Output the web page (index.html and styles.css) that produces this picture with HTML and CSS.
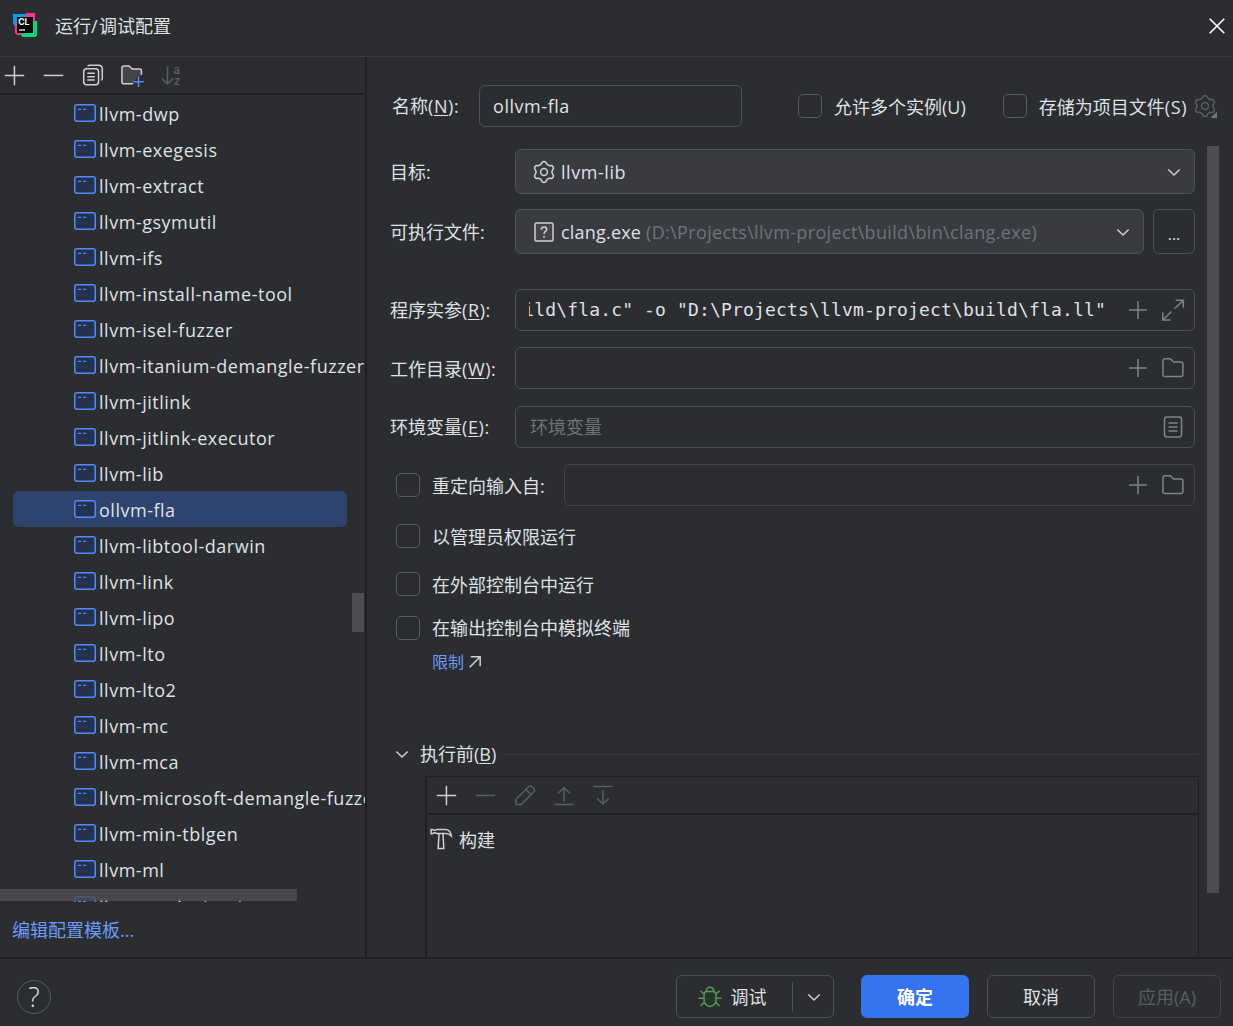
FILE: index.html
```html
<!DOCTYPE html>
<html lang="zh-CN">
<head>
<meta charset="utf-8">
<title>运行/调试配置</title>
<link rel="stylesheet" href="styles.css">
</head>
<body>
<svg class="defs" aria-hidden="true">
  <symbol id="add" viewBox="0 0 16 16"><path d="M8.300 1.800v13M1.800 8.300h13"/></symbol>
  <symbol id="remove" viewBox="0 0 16 16"><path d="M1.800 8.300h13"/></symbol>
  <symbol id="plus" viewBox="0 0 16 16"><path d="M8 2v12M2 8h12"/></symbol>
  <symbol id="chevron" viewBox="0 0 16 16"><path d="M4.200 6.300 8 10l3.800-3.700"/></symbol>
  <symbol id="folder" viewBox="0 0 16 16"><path d="M1.300 3.200a1.300 1.300 0 0 1 1.300-1.300h3.100c.4 0 .8.200 1.100.5l1.500 1.600h5c.7 0 1.300.6 1.300 1.300v7.100c0 .7-.6 1.300-1.300 1.300H2.600c-.7 0-1.300-.6-1.300-1.300z"/></symbol>
  <symbol id="gear" viewBox="-8 -8 16 16"><path d="M-1.200-6.600Q0-7.300 1.200-6.600Q2.150-3.720 5.120-4.340Q6.320-3.650 6.320-2.260Q4.300 0 6.320 2.260Q6.320 3.650 5.120 4.340Q2.150 3.720 1.200 6.600Q0 7.300-1.200 6.600Q-2.150 3.720-5.120 4.340Q-6.320 3.650-6.320 2.260Q-4.300 0-6.320-2.260Q-6.320-3.650-5.120-4.340Q-2.150-3.720-1.200-6.600z"/><circle r="2.300"/></symbol>
  <symbol id="app" viewBox="0 0 22 18"><rect x=".75" y=".75" width="20.500" height="16.500" rx="2.200" fill="#25324d" stroke="#548af7" stroke-width="1.500"/><path d="M4 5.300h3M9 5.300h3" stroke="#548af7" stroke-width="1.200"/></symbol>
</svg>
<div class="dialog">
  <header class="titlebar">
    <svg class="logo" viewBox="0 0 24 24">
      <path d="M0 1h14l4 10-16 3L0 10z" fill="#0a9be8"/>
      <path d="M13 0h9v9l-10 2zM2 11h8v11H4l-2-2z" fill="#ff318c"/>
      <path d="M20 8h4v14.500L22.500 24H9l-1-3 11-4z" fill="#00d886"/>
      <path d="M4 4h16v16H4z" fill="#000"/>
      <text x="5.300" y="11.500" class="logo-text">CL</text>
      <path d="M6 17h6" stroke="#fff" stroke-width="1.300"/>
    </svg>
    <h1 class="title">运行<span>/</span>调试配置</h1>
    <svg class="close" viewBox="0 0 16 16"><path d="m.7.7 14.600 14.600M15.300.7.7 15.300"/></svg>
  </header>
  <main class="content">
    <aside class="sidebar">
      <div class="toolbar">
        <svg class="icon"><use href="#add"/></svg>
        <svg class="icon"><use href="#remove"/></svg>
        <svg class="icon" viewBox="0 0 16 16"><path d="M4.500 2.200c.3-.5.700-.7 1.300-.7h5.900c1.500 0 2.500 1 2.500 2.500v6.200c0 .6-.2 1-.7 1.300"/><rect x="1.800" y="3.800" width="9.900" height="10.700" rx="2"/><path d="M4.200 6.800h5M4.200 9.100h5M4.200 11.400h5"/></svg>
        <svg class="icon" viewBox="0 0 16 16"><path d="M8.500 13.900H2.600c-.7 0-1.300-.6-1.300-1.300V3.300C1.300 2.600 1.900 2 2.600 2H6l2.200 2H13c.7 0 1.300.6 1.300 1.300v3.200L11.500 9z" fill="#43454a" stroke="none"/><path d="M8.800 13.900H2.600c-.7 0-1.300-.6-1.300-1.300V3.300C1.300 2.600 1.900 2 2.600 2H6l2.200 2H13c.7 0 1.300.6 1.300 1.300v2.500"/><path d="M12.300 9v7M8.800 12.500h7" stroke="#548af7"/></svg>
        <svg class="icon dim" viewBox="0 0 16 16"><path d="M5.700 2.300v11.700M2 10.400l3.700 3.600 3.700-3.600"/><text x="9.700" y="7.400" class="az">a</text><text x="10" y="14.600" class="az">z</text></svg>
      </div>
      <div class="tree">
        <div class="row"><svg class="app"><use href="#app"/></svg><span>llvm-dwp</span></div>
        <div class="row"><svg class="app"><use href="#app"/></svg><span>llvm-exegesis</span></div>
        <div class="row"><svg class="app"><use href="#app"/></svg><span>llvm-extract</span></div>
        <div class="row"><svg class="app"><use href="#app"/></svg><span>llvm-gsymutil</span></div>
        <div class="row"><svg class="app"><use href="#app"/></svg><span>llvm-ifs</span></div>
        <div class="row"><svg class="app"><use href="#app"/></svg><span>llvm-install-name-tool</span></div>
        <div class="row"><svg class="app"><use href="#app"/></svg><span>llvm-isel-fuzzer</span></div>
        <div class="row"><svg class="app"><use href="#app"/></svg><span>llvm-itanium-demangle-fuzzer</span></div>
        <div class="row"><svg class="app"><use href="#app"/></svg><span>llvm-jitlink</span></div>
        <div class="row"><svg class="app"><use href="#app"/></svg><span>llvm-jitlink-executor</span></div>
        <div class="row"><svg class="app"><use href="#app"/></svg><span>llvm-lib</span></div>
        <div class="row selected"><svg class="app"><use href="#app"/></svg><span>ollvm-fla</span></div>
        <div class="row"><svg class="app"><use href="#app"/></svg><span>llvm-libtool-darwin</span></div>
        <div class="row"><svg class="app"><use href="#app"/></svg><span>llvm-link</span></div>
        <div class="row"><svg class="app"><use href="#app"/></svg><span>llvm-lipo</span></div>
        <div class="row"><svg class="app"><use href="#app"/></svg><span>llvm-lto</span></div>
        <div class="row"><svg class="app"><use href="#app"/></svg><span>llvm-lto2</span></div>
        <div class="row"><svg class="app"><use href="#app"/></svg><span>llvm-mc</span></div>
        <div class="row"><svg class="app"><use href="#app"/></svg><span>llvm-mca</span></div>
        <div class="row"><svg class="app"><use href="#app"/></svg><span>llvm-microsoft-demangle-fuzzer</span></div>
        <div class="row"><svg class="app"><use href="#app"/></svg><span>llvm-min-tblgen</span></div>
        <div class="row"><svg class="app"><use href="#app"/></svg><span>llvm-ml</span></div>
        <div class="row"><svg class="app"><use href="#app"/></svg><span>llvm-modextract</span></div>
        <i class="thumb tree-v"></i>
        <i class="thumb tree-h"></i>
      </div>
      <a class="templates">编辑配置模板...</a>
    </aside>
    <section class="editor">
      <div class="line name-row">
        <label class="label">名称<span class="key">(<u>N</u>):</span></label>
        <div class="field name"><span class="target">ollvm-fla</span></div>
        <span class="check"></span><span class="low">允许多个实例(U)</span>
        <span class="check store"></span><span class="low">存储为项目文件<span class="key">(S)</span></span>
        <svg class="store-gear" viewBox="0 0 24 24"><use href="#gear" x="0" y="0" width="24" height="24"/><path d="M24 17.500V24h-6.500z" class="corner"/></svg>
      </div>
      <div class="line target-row">
        <label class="label">目标:</label>
        <div class="field combo"><svg class="icon"><use href="#gear"/></svg><span class="latin target">llvm-lib</span><svg class="icon"><use href="#chevron"/></svg></div>
      </div>
      <div class="line exec-row">
        <label class="label">可执行文件:</label>
        <div class="field combo"><svg class="icon" viewBox="0 0 16 16"><rect x="2" y="2" width="12" height="12" rx="1.200" fill="#43454a"/><path d="M6.200 6.500C6.200 5.300 7 4.700 8 4.700s1.800.6 1.800 1.600C9.800 7.600 8 7.700 8 9.300"/><path d="M8 10.500v1.300" /></svg><span class="latin">clang.exe <em>(D:\Projects\llvm-project\build\bin\clang.exe)</em></span><svg class="icon"><use href="#chevron"/></svg></div>
        <button class="more">...</button>
      </div>
      <div class="line args-row">
        <label class="label">程序实参<span class="key">(<u>R</u>):</span></label>
        <div class="field"><div class="mono"><span>ild\fla.c" -o "D:\Projects\llvm-project\build\fla.ll"</span></div><svg class="icon gray"><use href="#plus"/></svg><svg class="icon gray end" viewBox="0 0 16 16"><path d="M9.800 1.500h5.100v5M14.500 1.900 9 7.200M1.200 9.500v5.200h5M1.600 14.300 7 9"/></svg></div>
      </div>
      <div class="line dir-row">
        <label class="label low">工作目录<span class="key">(<u>W</u>):</span></label>
        <div class="field"><span class="grow"></span><svg class="icon gray"><use href="#plus"/></svg><svg class="icon gray end"><use href="#folder"/></svg></div>
      </div>
      <div class="line env-row">
        <label class="label">环境变量<span class="key">(<u>E</u>):</span></label>
        <div class="field"><span class="grow hint">环境变量</span><svg class="icon gray end" viewBox="0 0 16 16"><rect x="2.300" y="1.400" width="11.400" height="13.200" rx="1.600"/><path d="M5 5.400h6M5 8h6M5 10.600h6"/></svg></div>
      </div>
      <div class="line redirect-row">
        <span class="check"></span><span class="redirect-label low">重定向输入自:</span>
        <div class="field off"><span class="grow"></span><svg class="icon gray"><use href="#plus"/></svg><svg class="icon gray end"><use href="#folder"/></svg></div>
      </div>
      <div class="option admin"><span class="check"></span><span class="low">以管理员权限运行</span></div>
      <div class="option external"><span class="check"></span><span class="low">在外部控制台中运行</span></div>
      <div class="option terminal"><span class="check"></span><span>在输出控制台中模拟终端</span></div>
      <a class="limits">限制<svg viewBox="0 0 12 12"><path d="M1.800.8h9.400v9.400M11.200.8.7 11.300"/></svg></a>
      <div class="before">
        <svg class="icon"><use href="#chevron"/></svg><span>执行前(<u>B</u>)</span><hr>
      </div>
      <div class="tasks">
        <div class="toolbar">
          <svg class="icon"><use href="#add"/></svg>
          <svg class="icon dim"><use href="#remove"/></svg>
          <svg class="icon dim" viewBox="0 0 16 16"><path d="M2 14.300v-3.500L10.600 2.300c.5-.5 1.300-.5 1.800 0L14 3.900c.5.5.5 1.300 0 1.800L5.500 14.300zM8.700 4.300l3.300 3.300"/></svg>
          <svg class="icon dim" viewBox="0 0 16 16"><path d="M8 12.400V3.200M4.200 6.800 8 3l3.800 3.800M1.500 14.400h13"/></svg>
          <svg class="icon dim" viewBox="0 0 16 16"><path d="M8 4.700v9M4.200 10.300 8 14l3.800-3.700M1.500 2.300h13"/></svg>
        </div>
        <div class="task">
          <svg class="icon" viewBox="0 0 16 16"><path d="M1.400 1.600h1l.8.6h1l.8-.6h5.800c2.200 0 3.700 1.800 4.100 4.400-.9-1-2-1.700-3.700-1.700H5l-.8-.5h-1l-.8.7h-1zM6.600 4.500v1.700l-.5 8.200h3.800l-.5-8.200V4.500"/></svg>
          <span class="low">构建</span>
        </div>
      </div>
      <i class="thumb editor-v"></i>
    </section>
  </main>
  <footer class="footer">
    <span class="help">?</span>
    <div class="button debug">
      <svg class="icon bug" viewBox="0 0 16 16"><path d="M5.500 4.500V4a2.500 2.500 0 0 1 5 0v.5M4 6.500c0-1.400.7-2.200 1.800-2.200h4.400c1.100 0 1.800.8 1.800 2.200V10a4 4.300 0 0 1-8 0z" fill="#253627"/><path d="M4 6 1.600 3.800M12 6l2.400-2.200M4 8.800H.3M12 8.800h3.700M4.300 11.500 1.600 14M11.700 11.500l2.700 2.500"/></svg>
      <span class="debug-text">调试</span><i class="split"></i>
      <svg class="icon"><use href="#chevron"/></svg>
    </div>
    <div class="button ok">确定</div>
    <div class="button cancel">取消</div>
    <div class="button apply">应用(A)</div>
  </footer>
</div>
</body>
</html>
```
FILE: styles.css
```css
* { box-sizing: border-box; }
body {
  margin: 0;
  background: #2b2d30;
  color: #dfe1e5;
  font: 18px/24px "Open Sans", "Noto Sans CJK SC", sans-serif;
}
.defs { display: none; }
.dialog {
  display: flex;
  flex-direction: column;
  width: 1233px;
  height: 1026px;
  overflow: hidden;
  white-space: nowrap;
  border-bottom: 1px solid #26262b;
}
.icon {
  width: 24px;
  height: 24px;
  flex: none;
  overflow: visible;
  fill: none;
  stroke: #ced0d6;
  stroke-width: 1;
}
.icon.gray { stroke: #80838a; }
.icon.dim { stroke: #5a5d63; }
.thumb { position: absolute; background: #4d4e51; }
.low { padding-top: 2px; }
.key { letter-spacing: 0.600px; }

.titlebar {
  flex: none;
  display: flex;
  align-items: center;
  height: 57px;
  padding: 0 8px 6px 13px;
  border-bottom: 1px solid #3a3c40;
}
.logo { width: 24px; height: 24px; }
.logo-text { font: bold 8.500px "Inter", sans-serif; fill: #fff; }
.title { margin: 0 auto 0 18px; padding-top: 1px; font-size: 18px; font-weight: 400; }
.title span { letter-spacing: 1.500px; }
.close { width: 16px; height: 16px; margin-top: 2px; fill: none; stroke: #fff; stroke-width: 1.600; }

.content { flex: none; display: flex; height: 900px; }
.sidebar {
  flex: none;
  display: flex;
  flex-direction: column;
  width: 367px;
  border-right: 2px solid #1e1f22;
}
.toolbar {
  flex: none;
  display: flex;
  align-items: center;
  gap: 15.300px;
  height: 38px;
  padding-left: 2px;
  border-bottom: 2px solid #1e1f22;
}
.az { font: 600 7.500px "Inter", sans-serif; fill: #5a5d63; stroke: none; }
.tree { position: relative; height: 807px; overflow: hidden; }
.row {
  display: flex;
  align-items: center;
  gap: 3px;
  height: 36px;
  margin: 0 18px 0 13px;
  padding-left: 61px;
  border-radius: 6px;
  letter-spacing: 0.520px;
}
.row span { padding-top: 2px; }
.selected { background: #2e436e; }
.app { flex: none; width: 22px; height: 18px; }
.tree-v { right: 1px; top: 498px; width: 12px; height: 39px; }
.tree-h { left: 0; bottom: 1px; width: 297px; height: 12px; opacity: 0.850; }
.templates { margin: 16px 0 0 12px; color: #6b9bfa; }

.editor {
  position: relative;
  flex: 1;
  min-width: 0;
  display: flex;
  flex-direction: column;
  padding: 28px 38px 0 23px;
}
.line { flex: none; display: flex; align-items: center; height: 42px; }
.label { flex: none; width: 125px; }
u { text-underline-offset: 2px; text-decoration-thickness: 1px; }
.field {
  flex: 1;
  min-width: 0;
  height: 100%;
  display: flex;
  align-items: center;
  padding: 0 9px 0 13px;
  border: 1.500px solid #4e5157;
  border-radius: 6px;
}
.field.off { border-color: #43454a; }
.grow { flex: 1; }
.end { margin-left: 11px; }
.combo { background: #393b40; padding: 0 8px 0 16px; }
.latin { flex: 1; margin-left: 5px; letter-spacing: 0.200px; }
.target { letter-spacing: 0.550px; }
.combo em { font-style: normal; color: #6f737a; letter-spacing: 0.345px; }
.hint { color: #6f737a; margin-left: 1px; }
.check {
  flex: none;
  width: 24px;
  height: 24px;
  margin-right: 12px;
  border: 1.500px solid #5a5d63;
  border-radius: 5px;
}
.name-row { margin-right: -34px; padding-left: 2px; }
.name-row .label { width: 87px; }
.name { flex: none; width: 263px; margin-right: 56px; }
.store { margin-left: 37px; }
.store-gear {
  flex: none;
  width: 24px;
  height: 24px;
  margin-left: 6px;
  fill: none;
  stroke: #5a5d63;
  overflow: visible;
}
.corner { fill: #6f737a; stroke: none; }
.target-row { height: 45px; margin-top: 22px; }
.exec-row { height: 45px; margin-top: 15px; }
.more {
  width: 42px;
  height: 45px;
  margin-left: 9px;
  padding: 4px 0 0;
  background: none;
  color: inherit;
  font: 16px "Open Sans", sans-serif;
  border: 1.500px solid #4e5157;
  border-radius: 6px;
}
.args-row { margin-top: 35px; }
.mono {
  flex: 1;
  display: flex;
  justify-content: flex-end;
  overflow: hidden;
  margin-right: 20px;
  font-family: "DejaVu Sans Mono", monospace;
  letter-spacing: 0.160px;
}
.dir-row { margin-top: 16px; }
.env-row { margin-top: 17px; }
.redirect-row { margin-top: 16px; padding-left: 6px; }
.redirect-label { width: 132px; }
.option { flex: none; display: flex; align-items: center; height: 24px; padding-left: 6px; }
.admin { margin-top: 18px; }
.external { margin-top: 24px; }
.terminal { margin-top: 20px; }
.limits {
  display: flex;
  align-items: center;
  gap: 5px;
  margin: 10px 0 0 42px;
  color: #6b9bfa;
  font-size: 16px;
}
.limits svg { width: 12px; height: 12px; fill: none; stroke: #ced0d6; stroke-width: 1.500; }
.before { display: flex; align-items: center; margin: 68px -4px 0 0; }
.before span { margin: 0 8px 0 6px; }
.before hr { flex: 1; height: 1px; margin: 1px 0 0; border: 0; background: #393b40; }
.tasks {
  flex: 1;
  margin: 10px -4px 0 35px;
  border: 1px solid #1e1f22;
  border-width: 1px 1px 0 2px;
}
.tasks .toolbar { padding-left: 7px; height: 38px; }
.task { display: flex; align-items: center; gap: 6px; margin: 11px 0 0 2px; }
.editor-v { left: 840px; top: 89px; width: 12px; height: 747px; }

.footer {
  flex: 1;
  display: flex;
  align-items: center;
  border-top: 2px solid #1e1f22;
  padding: 9px 12px 0 17px;
}
.help {
  width: 34px;
  height: 34px;
  margin-right: auto;
  border: 1.500px solid #5a5d63;
  border-radius: 50%;
  font-size: 27px;
  font-weight: 300;
  line-height: 32px;
  text-align: center;
}
.button {
  display: flex;
  align-items: center;
  justify-content: center;
  width: 108px;
  height: 43px;
  margin-left: 18px;
  border: 1.500px solid #4e5157;
  border-radius: 6px;
}
.debug { width: 158px; margin-right: 9px; padding-left: 13px; }
.bug { stroke: #57965c; }
.debug-text { margin: 0 25px 0 9px; }
.split { width: 1px; height: 30px; margin-right: 9px; background: #4e5157; }
.ok { background: #3574f0; border-color: #3574f0; color: #fff; font-weight: 700; }
.apply { border-color: #43454a; color: #5a5d63; }
```
